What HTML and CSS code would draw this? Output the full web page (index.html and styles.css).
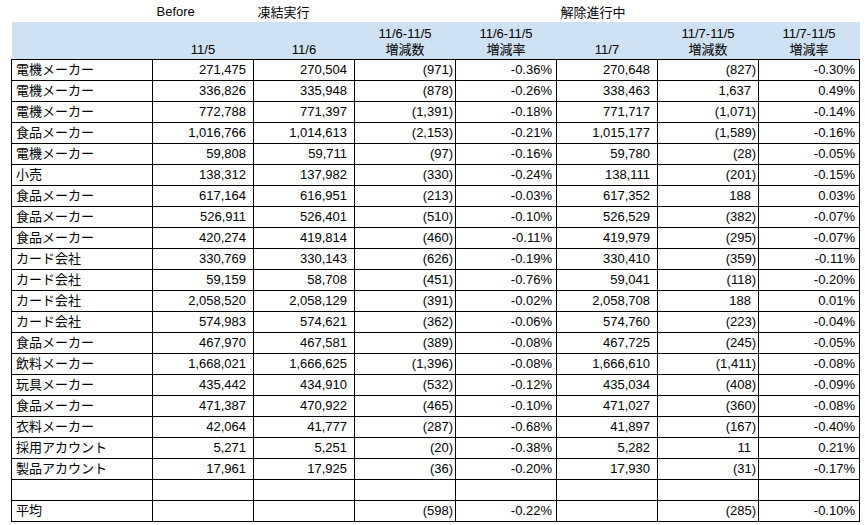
FILE: index.html
```html
<!DOCTYPE html>
<html lang="ja">
<head>
<meta charset="utf-8">
<title>凍結実行 / 解除進行中</title>
<link rel="stylesheet" href="styles.css">
</head>
<body>
<div class="sheet">
<table class="grid">
  <colgroup>
    <col class="c-name">
    <col class="c-num"><col class="c-num"><col class="c-num"><col class="c-num">
    <col class="c-num"><col class="c-num"><col class="c-num">
  </colgroup>
  <thead>
    <tr class="labels">
      <th></th><th>Before</th><th>凍結実行</th><th></th><th></th><th>解除進行中</th><th></th><th></th>
    </tr>
    <tr class="head">
      <th></th>
      <th>11/5</th>
      <th>11/6</th>
      <th>11/6-11/5<br>増減数</th>
      <th>11/6-11/5<br>増減率</th>
      <th>11/7</th>
      <th>11/7-11/5<br>増減数</th>
      <th>11/7-11/5<br>増減率</th>
    </tr>
  </thead>
  <tbody>
    <tr><td class="name">電機メーカー</td><td class="a">271,475</td><td class="a">270,504</td><td class="n">(971)</td><td class="p">-0.36%</td><td class="a">270,648</td><td class="n">(827)</td><td class="p">-0.30%</td></tr>
    <tr><td class="name">電機メーカー</td><td class="a">336,826</td><td class="a">335,948</td><td class="n">(878)</td><td class="p">-0.26%</td><td class="a">338,463</td><td class="a">1,637</td><td class="p">0.49%</td></tr>
    <tr><td class="name">電機メーカー</td><td class="a">772,788</td><td class="a">771,397</td><td class="n">(1,391)</td><td class="p">-0.18%</td><td class="a">771,717</td><td class="n">(1,071)</td><td class="p">-0.14%</td></tr>
    <tr><td class="name">食品メーカー</td><td class="a">1,016,766</td><td class="a">1,014,613</td><td class="n">(2,153)</td><td class="p">-0.21%</td><td class="a">1,015,177</td><td class="n">(1,589)</td><td class="p">-0.16%</td></tr>
    <tr><td class="name">電機メーカー</td><td class="a">59,808</td><td class="a">59,711</td><td class="n">(97)</td><td class="p">-0.16%</td><td class="a">59,780</td><td class="n">(28)</td><td class="p">-0.05%</td></tr>
    <tr><td class="name">小売</td><td class="a">138,312</td><td class="a">137,982</td><td class="n">(330)</td><td class="p">-0.24%</td><td class="a">138,111</td><td class="n">(201)</td><td class="p">-0.15%</td></tr>
    <tr><td class="name">食品メーカー</td><td class="a">617,164</td><td class="a">616,951</td><td class="n">(213)</td><td class="p">-0.03%</td><td class="a">617,352</td><td class="a">188</td><td class="p">0.03%</td></tr>
    <tr><td class="name">食品メーカー</td><td class="a">526,911</td><td class="a">526,401</td><td class="n">(510)</td><td class="p">-0.10%</td><td class="a">526,529</td><td class="n">(382)</td><td class="p">-0.07%</td></tr>
    <tr><td class="name">食品メーカー</td><td class="a">420,274</td><td class="a">419,814</td><td class="n">(460)</td><td class="p">-0.11%</td><td class="a">419,979</td><td class="n">(295)</td><td class="p">-0.07%</td></tr>
    <tr><td class="name">カード会社</td><td class="a">330,769</td><td class="a">330,143</td><td class="n">(626)</td><td class="p">-0.19%</td><td class="a">330,410</td><td class="n">(359)</td><td class="p">-0.11%</td></tr>
    <tr><td class="name">カード会社</td><td class="a">59,159</td><td class="a">58,708</td><td class="n">(451)</td><td class="p">-0.76%</td><td class="a">59,041</td><td class="n">(118)</td><td class="p">-0.20%</td></tr>
    <tr><td class="name">カード会社</td><td class="a">2,058,520</td><td class="a">2,058,129</td><td class="n">(391)</td><td class="p">-0.02%</td><td class="a">2,058,708</td><td class="a">188</td><td class="p">0.01%</td></tr>
    <tr><td class="name">カード会社</td><td class="a">574,983</td><td class="a">574,621</td><td class="n">(362)</td><td class="p">-0.06%</td><td class="a">574,760</td><td class="n">(223)</td><td class="p">-0.04%</td></tr>
    <tr><td class="name">食品メーカー</td><td class="a">467,970</td><td class="a">467,581</td><td class="n">(389)</td><td class="p">-0.08%</td><td class="a">467,725</td><td class="n">(245)</td><td class="p">-0.05%</td></tr>
    <tr><td class="name">飲料メーカー</td><td class="a">1,668,021</td><td class="a">1,666,625</td><td class="n">(1,396)</td><td class="p">-0.08%</td><td class="a">1,666,610</td><td class="n">(1,411)</td><td class="p">-0.08%</td></tr>
    <tr><td class="name">玩具メーカー</td><td class="a">435,442</td><td class="a">434,910</td><td class="n">(532)</td><td class="p">-0.12%</td><td class="a">435,034</td><td class="n">(408)</td><td class="p">-0.09%</td></tr>
    <tr><td class="name">食品メーカー</td><td class="a">471,387</td><td class="a">470,922</td><td class="n">(465)</td><td class="p">-0.10%</td><td class="a">471,027</td><td class="n">(360)</td><td class="p">-0.08%</td></tr>
    <tr><td class="name">衣料メーカー</td><td class="a">42,064</td><td class="a">41,777</td><td class="n">(287)</td><td class="p">-0.68%</td><td class="a">41,897</td><td class="n">(167)</td><td class="p">-0.40%</td></tr>
    <tr><td class="name">採用アカウント</td><td class="a">5,271</td><td class="a">5,251</td><td class="n">(20)</td><td class="p">-0.38%</td><td class="a">5,282</td><td class="a">11</td><td class="p">0.21%</td></tr>
    <tr><td class="name">製品アカウント</td><td class="a">17,961</td><td class="a">17,925</td><td class="n">(36)</td><td class="p">-0.20%</td><td class="a">17,930</td><td class="n">(31)</td><td class="p">-0.17%</td></tr>
    <tr><td class="name"></td><td></td><td></td><td></td><td></td><td></td><td></td><td></td></tr>
    <tr><td class="name">平均</td><td></td><td></td><td class="n">(598)</td><td class="p">-0.22%</td><td></td><td class="n">(285)</td><td class="p">-0.10%</td></tr>
  </tbody>
</table>
</div>
</body>
</html>
```

FILE: styles.css
```css
html, body {
  margin: 0;
  padding: 0;
  background: #ffffff;
}

body {
  font-family: "Liberation Sans", Arial, "Noto Sans CJK JP", sans-serif;
  font-size: 13px;
  color: #000000;
}

.sheet {
  padding: 1px 0 0 11px;
}

.grid {
  border-collapse: collapse;
  table-layout: fixed;
  width: 849px;
}

.c-name { width: 141px; }
.c-num { width: 101px; }

.grid th {
  font-weight: normal;
  padding: 0;
}

.labels th {
  height: 21px;
  text-align: left;
  padding-left: 4px;
  vertical-align: middle;
  white-space: nowrap;
}

.head th {
  background: #cfe2f3;
  height: 36px;
  text-align: center;
  vertical-align: bottom;
  line-height: 16px;
  padding-bottom: 1px;
}

.grid td {
  border: 1px solid #000000;
  height: 20px;
  padding: 0 3px 0 4px;
  line-height: 20px;
  text-align: right;
  white-space: nowrap;
  overflow: hidden;
}

.grid td.name {
  text-align: left;
  padding-left: 4px;
}

.grid td.a {
  padding-right: 7px;
}

.grid td.n {
  padding-right: 2px;
}

.grid td.p {
  padding-right: 4px;
}
```
